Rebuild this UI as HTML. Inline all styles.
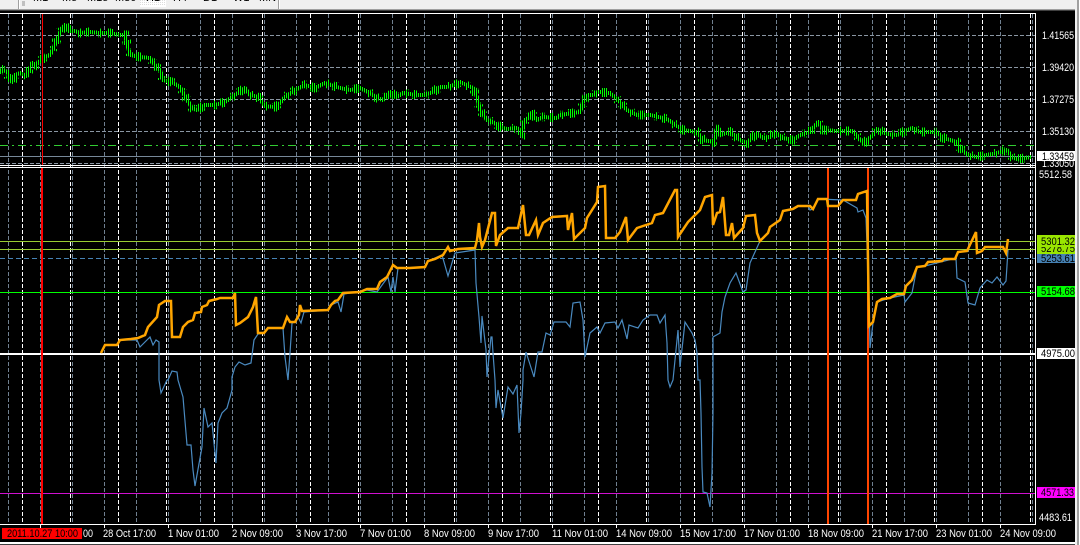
<!DOCTYPE html>
<html><head><meta charset="utf-8"><style>
html,body{margin:0;padding:0;background:#000;width:1080px;height:545px;overflow:hidden}
svg{display:block}
text{font-family:"Liberation Sans",sans-serif;font-size:11px;fill:#fff}
.d{fill:#000}
</style></head><body>
<svg width="1080" height="545" viewBox="0 0 1080 545" xmlns="http://www.w3.org/2000/svg" shape-rendering="crispEdges">
<defs>
<pattern id="bars" x="0" y="0" width="2" height="4" patternUnits="userSpaceOnUse"><rect x="0" y="0" width="1" height="4" fill="#00ff00"/></pattern>
<pattern id="dots" x="0" y="0" width="2" height="2" patternUnits="userSpaceOnUse"><rect width="2" height="2" fill="#fff"/><rect width="1" height="1" fill="#ddd"/></pattern>
<clipPath id="tb"><rect x="0" y="0" width="1080" height="9"/></clipPath>
</defs>
<rect width="1080" height="545" fill="#000"/>
<!-- toolbar -->
<rect x="0" y="0" width="1080" height="9" fill="#f0f0f0"/>
<rect x="0" y="9" width="1080" height="1" fill="#a0a0a0"/>
<rect x="0" y="10" width="1080" height="1" fill="#404040"/>
<rect x="18" y="0" width="1" height="9" fill="#a0a0a0"/>
<rect x="19" y="0" width="1" height="9" fill="#fff"/>
<rect x="22" y="1" width="3" height="5" fill="#c0c0c0"/>
<rect x="140" y="0" width="26" height="7" fill="url(#dots)"/>
<rect x="165" y="0" width="1" height="7" fill="#fff"/>
<rect x="140" y="6" width="26" height="1" fill="#fff"/>
<rect x="278" y="0" width="1" height="9" fill="#a0a0a0"/>
<rect x="279" y="0" width="1" height="9" fill="#fff"/>
<g clip-path="url(#tb)">
<text class="d" x="33" y="1">M1</text><text class="d" x="62" y="1">M5</text><text class="d" x="87" y="1">M15</text><text class="d" x="115" y="1">M30</text><text class="d" x="146" y="1">H1</text><text class="d" x="173" y="1">H4</text><text class="d" x="203" y="1">D1</text><text class="d" x="233" y="1">W1</text><text class="d" x="259" y="1">MN</text>
</g>
<!-- vertical grid -->
<path fill="none" stroke="#708090" stroke-width="1" stroke-dasharray="4 2" d="M8.5 14V524M40.5 14V524M72.5 14V524M104.5 14V524M136.5 14V524M168.5 14V524M200.5 14V524M232.5 14V524M264.5 14V524M296.5 14V524M328.5 14V524M360.5 14V524M392.5 14V524M424.5 14V524M456.5 14V524M488.5 14V524M520.5 14V524M552.5 14V524M584.5 14V524M616.5 14V524M648.5 14V524M680.5 14V524M712.5 14V524M744.5 14V524M776.5 14V524M808.5 14V524M840.5 14V524M872.5 14V524M904.5 14V524M936.5 14V524M968.5 14V524M1000.5 14V524M1032.5 14V524"/>
<path fill="none" stroke="#fff" stroke-width="1" stroke-dasharray="4 2" d="M22.5 14V524M70.5 14V524M118.5 14V524M166.5 14V524M214.5 14V524M262.5 14V524M310.5 14V524M358.5 14V524M406.5 14V524M454.5 14V524M502.5 14V524M550.5 14V524M598.5 14V524M646.5 14V524M694.5 14V524M742.5 14V524M790.5 14V524M838.5 14V524M886.5 14V524M934.5 14V524M982.5 14V524M1030.5 14V524"/>
<!-- top pane horizontals -->
<path fill="none" stroke="#8a96a3" stroke-width="1" stroke-dasharray="4 2" d="M0 35.5H1035M0 67.5H1035M0 99.5H1035M0 131.5H1035M0 163.5H1035"/>
<path fill="none" stroke="#32cd32" stroke-width="1" stroke-dasharray="8 4 2 4" d="M0 145.5H1035"/>
<rect x="0" y="156" width="1036" height="1" fill="#778899"/>
<!-- green price bars -->
<polyline fill="none" stroke="url(#bars)" stroke-width="4" stroke-linejoin="round" points="0,69 8,72 9,80 12,82 15,75 20,73 27,76 32,63 36,65 41,60 45,57 50,55 54,47 58,37 62,28 65,25 69,31 75,31 80,33 90,32 100,33 110,33 120,35 125,35 127,43 130,55 140,57 150,58 155,65 160,70 163,80 172,82 180,87 186,98 192,108 197,110 205,105 215,105 225,102 235,95 245,88 250,95 258,97 265,106 275,107 280,103 285,97 295,90 305,85 315,88 325,83 340,88 350,90 360,88 370,93 377,98 383,100 390,92 397,97 403,93 417,95 425,95 433,92 440,87 447,87 457,84 460,82 473,88 477,97 480,110 487,120 493,122 500,127 507,129 517,128 522,132 525,120 533,115 537,120 543,117 557,118 560,115 573,113 580,112 583,102 588,95 593,95 598,92 610,93 620,102 627,110 637,115 650,115 667,119 677,126 683,130 697,132 703,140 713,142 718,132 720,135 730,132 740,140 747,143 757,133 763,138 770,137 775,132 783,138 793,140 800,135 810,132 818,122 823,130 837,131 853,131 860,140 865,142 873,135 877,129 887,134 897,135 903,132 912,128 920,132 937,132 943,138 957,142 960,148 968,155 977,157 987,155 997,153 1007,150 1012,157 1017,159 1032,157"/>
<polyline fill="none" stroke="url(#bars)" stroke-width="9" stroke-dasharray="4 9 2 6 6 11 2 5" points="0,69 8,72 9,80 12,82 15,75 20,73 27,76 32,63 36,65 41,60 45,57 50,55 54,47 58,37 62,28 65,25 69,31 75,31 80,33 90,32 100,33 110,33 120,35 125,35 127,43 130,55 140,57 150,58 155,65 160,70 163,80 172,82 180,87 186,98 192,108 197,110 205,105 215,105 225,102 235,95 245,88 250,95 258,97 265,106 275,107 280,103 285,97 295,90 305,85 315,88 325,83 340,88 350,90 360,88 370,93 377,98 383,100 390,92 397,97 403,93 417,95 425,95 433,92 440,87 447,87 457,84 460,82 473,88 477,97 480,110 487,120 493,122 500,127 507,129 517,128 522,132 525,120 533,115 537,120 543,117 557,118 560,115 573,113 580,112 583,102 588,95 593,95 598,92 610,93 620,102 627,110 637,115 650,115 667,119 677,126 683,130 697,132 703,140 713,142 718,132 720,135 730,132 740,140 747,143 757,133 763,138 770,137 775,132 783,138 793,140 800,135 810,132 818,122 823,130 837,131 853,131 860,140 865,142 873,135 877,129 887,134 897,135 903,132 912,128 920,132 937,132 943,138 957,142 960,148 968,155 977,157 987,155 997,153 1007,150 1012,157 1017,159 1032,157"/>
<!-- pane lines -->
<rect x="0" y="13" width="1036" height="1" fill="#fff"/>
<rect x="0" y="165" width="1036" height="1" fill="#fff"/>
<rect x="0" y="167" width="1036" height="1" fill="#fff"/>
<rect x="1035" y="13" width="1" height="512" fill="#fff"/>
<!-- levels -->
<rect x="0" y="241" width="1035" height="1" fill="#9acd32"/>
<rect x="0" y="249" width="1035" height="1" fill="#9acd32"/>
<path d="M0 258.5H1035" stroke="#4682b4" stroke-width="1" stroke-dasharray="5 3" fill="none"/>
<rect x="0" y="292" width="1035" height="1" fill="#00ff00"/>
<rect x="0" y="353" width="1035" height="2" fill="#fff"/>
<rect x="0" y="493" width="1035" height="1" fill="#d010d0"/>
<!-- verticals -->
<rect x="42" y="14" width="1" height="151" fill="#ff0000"/>
<rect x="41" y="168" width="2" height="356" fill="#ff0000"/>
<rect x="827" y="168" width="2" height="356" fill="#ff4500"/>
<rect x="867" y="168" width="2" height="356" fill="#ff4500"/>
<!-- blue line -->
<polyline shape-rendering="auto" fill="none" stroke="#4a8ac0" stroke-width="1.2" points="101,353 105,345 117,345 120,340 137,340 140,347 150,337 153,345 156,340 159,342 159,380 161,393 167,380 168,380 172,371 177,372 178,380 183,397 186,433 187,445 191,445 193,470 195,486 202,447 204,408 208,427 212,423 216,463 218,423 222,413 227,408 232,390 232,377 235,367 239,362 245,365 251,363 254,340 258,334 264,333 268,328 283,328 285,357 288,380 290,353 292,323 295,322 298,317 301,323 304,312 328,310 331,305 338,302 341,312 344,294 367,290 377,292 388,277 391,292 393,277 395,292 398,268 425,267 428,261 442,255 448,276 455,253 475,250 476,283 479,317 481,343 482,316 486,350 487,377 491,337 492,337 493,353 495,380 496,408 498,390 503,418 508,387 513,394 517,385 519,433 521,413 523,380 523,370 526,352 534,377 538,352 542,352 546,333 550,335 554,322 566,322 570,327 573,303 580,302 583,320 585,357 590,333 597,327 600,333 605,323 615,322 618,328 622,320 627,339 629,325 638,328 643,320 650,315 657,315 660,323 665,315 667,343 668,380 670,387 673,380 678,330 680,367 685,322 692,333 695,340 697,353 698,380 700,380 701,413 702,467 703,492 707,493 710,507 712,473 713,413 713,380 713,337 720,333 722,312 725,297 730,283 736,273 743,292 746,290 750,263 755,252 760,241 768,233 770,227 780,220 783,211 793,209 798,206 808,206 810,210 813,209 818,199 843,200 857,208 858,212 863,210 866,218 869,300 870,348 873,323 877,302 890,298 904,295 905,302 912,293 917,267 925,266 956,258 957,278 965,282 968,303 975,305 980,288 987,280 992,283 997,277 1003,285 1006,281 1008,250"/>
<!-- orange line -->
<polyline shape-rendering="auto" fill="none" stroke="#ffa500" stroke-width="2.5" stroke-linejoin="miter" points="101,353 105,345 117,345 120,340 131,339 138,338 145,335 148,327 157,317 159,305 165,301 171,301 172,337 180,337 183,327 188,322 193,320 195,313 201,312 202,307 207,305 209,301 217,299 220,298 233,298 235,293 236,325 240,323 248,317 253,307 256,297 257,315 258,333 264,333 268,328 283,328 287,317 290,322 295,322 299,315 300,305 302,311 328,310 331,305 335,301 338,300 343,293 360,292 367,289 377,289 380,282 387,277 393,265 397,268 410,268 425,267 428,261 435,259 443,255 448,247 450,251 458,249 475,248 477,240 479,223 480,237 482,247 485,240 492,213 495,213 496,246 500,235 508,228 518,228 523,205 526,235 529,235 536,220 538,235 543,223 552,217 567,216 568,230 572,213 574,239 585,228 587,218 592,210 597,202 598,187 605,186 606,238 615,238 620,232 626,217 628,240 637,228 652,223 655,215 663,213 675,190 677,190 678,237 688,222 700,210 705,197 712,195 713,225 717,213 720,212 723,197 726,235 729,235 732,223 734,238 743,228 746,216 755,215 757,233 760,241 768,233 770,227 780,220 783,211 793,209 798,206 810,206 813,209 818,199 827,199 828,206 838,206 843,200 856,200 858,194 867,191 868,260 869,326 873,322 877,302 882,299 890,298 897,294 904,294 906,286 912,280 917,267 925,266 928,262 942,261 944,259 955,259 958,252 967,251 976,232 977,253 982,251 985,247 1003,247 1006,253 1008,239"/>
<!-- bottom axis -->
<rect x="0" y="524" width="1036" height="1" fill="#fff"/>
<path stroke="#fff" stroke-width="1" fill="none" d="M40.5 525V528M104.5 525V528M168.5 525V528M232.5 525V528M296.5 525V528M360.5 525V528M424.5 525V528M488.5 525V528M552.5 525V528M616.5 525V528M680.5 525V528M744.5 525V528M808.5 525V528M872.5 525V528M936.5 525V528M1000.5 525V528"/>
<rect x="0" y="542" width="1076" height="2" fill="#fff"/>
<rect x="0" y="544" width="1080" height="1" fill="#404040"/>
<g shape-rendering="auto">
<text x="83" y="537" textLength="10" lengthAdjust="spacingAndGlyphs">00</text>
<text x="103" y="537" textLength="53" lengthAdjust="spacingAndGlyphs">28 Oct 17:00</text>
<text x="168" y="537" textLength="51" lengthAdjust="spacingAndGlyphs">1 Nov 01:00</text>
<text x="232" y="537" textLength="51" lengthAdjust="spacingAndGlyphs">2 Nov 09:00</text>
<text x="296" y="537" textLength="51" lengthAdjust="spacingAndGlyphs">3 Nov 17:00</text>
<text x="360" y="537" textLength="51" lengthAdjust="spacingAndGlyphs">7 Nov 01:00</text>
<text x="424" y="537" textLength="51" lengthAdjust="spacingAndGlyphs">8 Nov 09:00</text>
<text x="488" y="537" textLength="51" lengthAdjust="spacingAndGlyphs">9 Nov 17:00</text>
<text x="552" y="537" textLength="56" lengthAdjust="spacingAndGlyphs">11 Nov 01:00</text>
<text x="616" y="537" textLength="56" lengthAdjust="spacingAndGlyphs">14 Nov 09:00</text>
<text x="680" y="537" textLength="56" lengthAdjust="spacingAndGlyphs">15 Nov 17:00</text>
<text x="744" y="537" textLength="56" lengthAdjust="spacingAndGlyphs">17 Nov 01:00</text>
<text x="808" y="537" textLength="56" lengthAdjust="spacingAndGlyphs">18 Nov 09:00</text>
<text x="872" y="537" textLength="56" lengthAdjust="spacingAndGlyphs">21 Nov 17:00</text>
<text x="936" y="537" textLength="56" lengthAdjust="spacingAndGlyphs">23 Nov 01:00</text>
<text x="1000" y="537" textLength="56" lengthAdjust="spacingAndGlyphs">24 Nov 09:00</text>
</g>
<rect x="2" y="528" width="80" height="11" fill="#ff0000"/>
<text class="d" x="7" y="537" textLength="71" lengthAdjust="spacingAndGlyphs" shape-rendering="auto">2011.10.27 10:00</text>
<!-- right axis -->
<g shape-rendering="auto">
<text x="1042" y="39" textLength="32" lengthAdjust="spacingAndGlyphs">1.41565</text>
<text x="1042" y="71" textLength="32" lengthAdjust="spacingAndGlyphs">1.39420</text>
<text x="1042" y="103" textLength="32" lengthAdjust="spacingAndGlyphs">1.37275</text>
<text x="1042" y="135" textLength="32" lengthAdjust="spacingAndGlyphs">1.35130</text>
<text x="1042" y="167" textLength="32" lengthAdjust="spacingAndGlyphs">1.33050</text>
</g>
<rect x="1037" y="151" width="38" height="10" fill="#fff"/>
<rect x="1037" y="235" width="38" height="19" fill="#9ae600"/>
<rect x="1037" y="254" width="38" height="9" fill="#4682b4"/>
<rect x="1037" y="286" width="38" height="11" fill="#00ff00"/>
<rect x="1037" y="348" width="38" height="11" fill="#fff"/>
<rect x="1037" y="487" width="38" height="11" fill="#ff00ff"/>
<g shape-rendering="auto">
<text class="d" x="1042" y="160" textLength="32" lengthAdjust="spacingAndGlyphs">1.33459</text>
<text x="1039" y="178" textLength="33" lengthAdjust="spacingAndGlyphs">5512.58</text>
<text class="d" x="1041" y="252" textLength="34" lengthAdjust="spacingAndGlyphs">5278.75</text>
<rect x="1037" y="235" width="38" height="12" fill="#9ae600"/>
<text class="d" x="1041" y="245" textLength="34" lengthAdjust="spacingAndGlyphs">5301.32</text>
<text class="d" x="1041" y="262" textLength="34" lengthAdjust="spacingAndGlyphs">5253.61</text>
<text class="d" x="1041" y="295" textLength="34" lengthAdjust="spacingAndGlyphs">5154.68</text>
<text class="d" x="1041" y="357" textLength="34" lengthAdjust="spacingAndGlyphs">4975.00</text>
<text class="d" x="1041" y="496" textLength="33" lengthAdjust="spacingAndGlyphs">4571.33</text>
<text x="1039" y="521" textLength="33" lengthAdjust="spacingAndGlyphs">4483.61</text>
</g>
<!-- right edge -->
<rect x="1075" y="0" width="2" height="545" fill="#f0f0f0"/>
<rect x="1077" y="0" width="2" height="545" fill="#a0a0a0"/>
<rect x="1079" y="0" width="1" height="545" fill="#fff"/>
</svg>
</body></html>
